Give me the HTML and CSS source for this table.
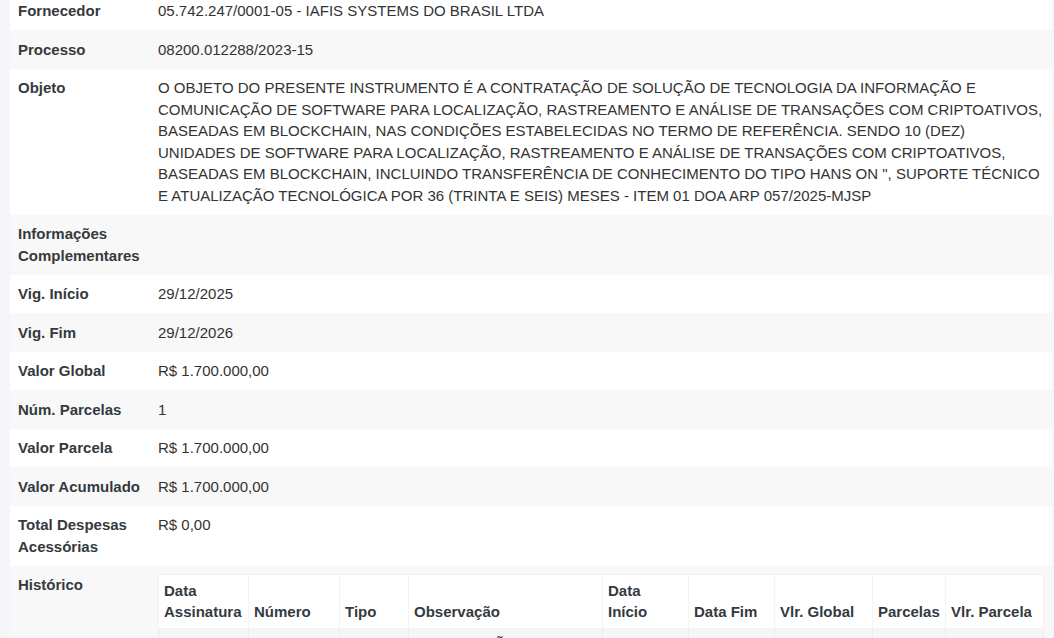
FILE: index.html
```html
<!DOCTYPE html>
<html lang="pt-BR">
<head>
  <meta charset="UTF-8" />
  <meta name="viewport" content="width=device-width, initial-scale=1.0"/>
  <title>Detalhes do Contrato</title>
  <link rel="stylesheet" href="styles.css">
</head>
<body>

  <div class="content">
    <table class="detail">
      <tbody>
        <tr>
          <th>Fornecedor</th>
          <td>05.742.247/0001-05 - IAFIS SYSTEMS DO BRASIL LTDA</td>
        </tr>
        <tr>
          <th>Processo</th>
          <td>08200.012288/2023-15</td>
        </tr>
        <tr>
          <th>Objeto</th>
          <td>O OBJETO DO PRESENTE INSTRUMENTO É A CONTRATAÇÃO DE SOLUÇÃO DE TECNOLOGIA DA INFORMAÇÃO E COMUNICAÇÃO DE SOFTWARE PARA LOCALIZAÇÃO, RASTREAMENTO E ANÁLISE DE TRANSAÇÕES COM CRIPTOATIVOS, BASEADAS EM BLOCKCHAIN, NAS CONDIÇÕES ESTABELECIDAS NO TERMO DE REFERÊNCIA. SENDO 10 (DEZ) UNIDADES DE SOFTWARE PARA LOCALIZAÇÃO, RASTREAMENTO E ANÁLISE DE TRANSAÇÕES COM CRIPTOATIVOS, BASEADAS EM BLOCKCHAIN, INCLUINDO TRANSFERÊNCIA DE CONHECIMENTO DO TIPO HANS ON ", SUPORTE TÉCNICO E ATUALIZAÇÃO TECNOLÓGICA POR 36 (TRINTA E SEIS) MESES - ITEM 01 DOA ARP 057/2025-MJSP</td>
        </tr>
        <tr>
          <th>Informações Complementares</th>
          <td></td>
        </tr>
        <tr>
          <th>Vig. Início</th>
          <td>29/12/2025</td>
        </tr>
        <tr>
          <th>Vig. Fim</th>
          <td>29/12/2026</td>
        </tr>
        <tr>
          <th>Valor Global</th>
          <td>R$ 1.700.000,00</td>
        </tr>
        <tr>
          <th>Núm. Parcelas</th>
          <td>1</td>
        </tr>
        <tr>
          <th>Valor Parcela</th>
          <td>R$ 1.700.000,00</td>
        </tr>
        <tr>
          <th>Valor Acumulado</th>
          <td>R$ 1.700.000,00</td>
        </tr>
        <tr>
          <th>Total Despesas Acessórias</th>
          <td>R$ 0,00</td>
        </tr>
        <tr>
          <th>Histórico</th>
          <td>
            <table class="history">
              <colgroup>
                <col class="w-assinatura">
                <col class="w-numero">
                <col class="w-tipo">
                <col class="w-obs">
                <col class="w-data">
                <col class="w-data">
                <col class="w-valor">
                <col class="w-parcelas">
                <col class="w-valor">
              </colgroup>
              <thead>
                <tr>
                  <th>Data Assinatura</th>
                  <th>Número</th>
                  <th>Tipo</th>
                  <th>Observação</th>
                  <th>Data Início</th>
                  <th>Data Fim</th>
                  <th>Vlr. Global</th>
                  <th>Parcelas</th>
                  <th>Vlr. Parcela</th>
                </tr>
              </thead>
              <tbody>
                <tr>
                  <td>26/12/2025</td>
                  <td>00045/2025</td>
                  <td>Contrato</td>
                  <td>CELEBRAÇÃO DO CONTRATO</td>
                  <td>29/12/2025</td>
                  <td>29/12/2026</td>
                  <td>R$ 1.700.000,00</td>
                  <td>1</td>
                  <td>R$ 1.700.000,00</td>
                </tr>
              </tbody>
            </table>
          </td>
        </tr>
      </tbody>
    </table>
  </div>

</body>
</html>
```

FILE: styles.css
```css
body {
  margin: 0;
  background: #f4f6f9;
  font-family: "Liberation Sans", Arial, sans-serif;
  font-size: 15px;
  line-height: 21.5px;
  color: #333;
}
.content {
  padding: 0 2px 0 10px;
  margin-top: -8.5px;
}
.detail {
  width: 100%;
  border-collapse: collapse;
  table-layout: fixed;
  background: #fff;
}
.detail > tbody > tr:nth-child(even) {
  background: #f8f8f8;
}
.detail > tbody > tr > th {
  width: 124px;
  padding: 8.5px 8px;
  text-align: left;
  vertical-align: top;
  font-weight: bold;
  color: #343a40;
}
.detail > tbody > tr > td {
  padding: 8.5px 8px;
  vertical-align: top;
}
.history {
  width: 100%;
  border-collapse: collapse;
  table-layout: fixed;
}
.history th {
  padding: 4.8px 5px;
  text-align: left;
  vertical-align: bottom;
  font-weight: bold;
  color: #343a40;
  background: #fff;
  border: 1px solid #f2f2f2;
}
.history td {
  padding: 4.8px 5px;
  vertical-align: top;
  background: #f6f6f6;
  border: 1px solid #ececec;
}
.w-assinatura { width: 90px; }
.w-numero { width: 91px; }
.w-tipo { width: 69px; }
.w-obs { width: 194px; }
.w-data { width: 86px; }
.w-valor { width: 98px; }
.w-parcelas { width: 73px; }
```
